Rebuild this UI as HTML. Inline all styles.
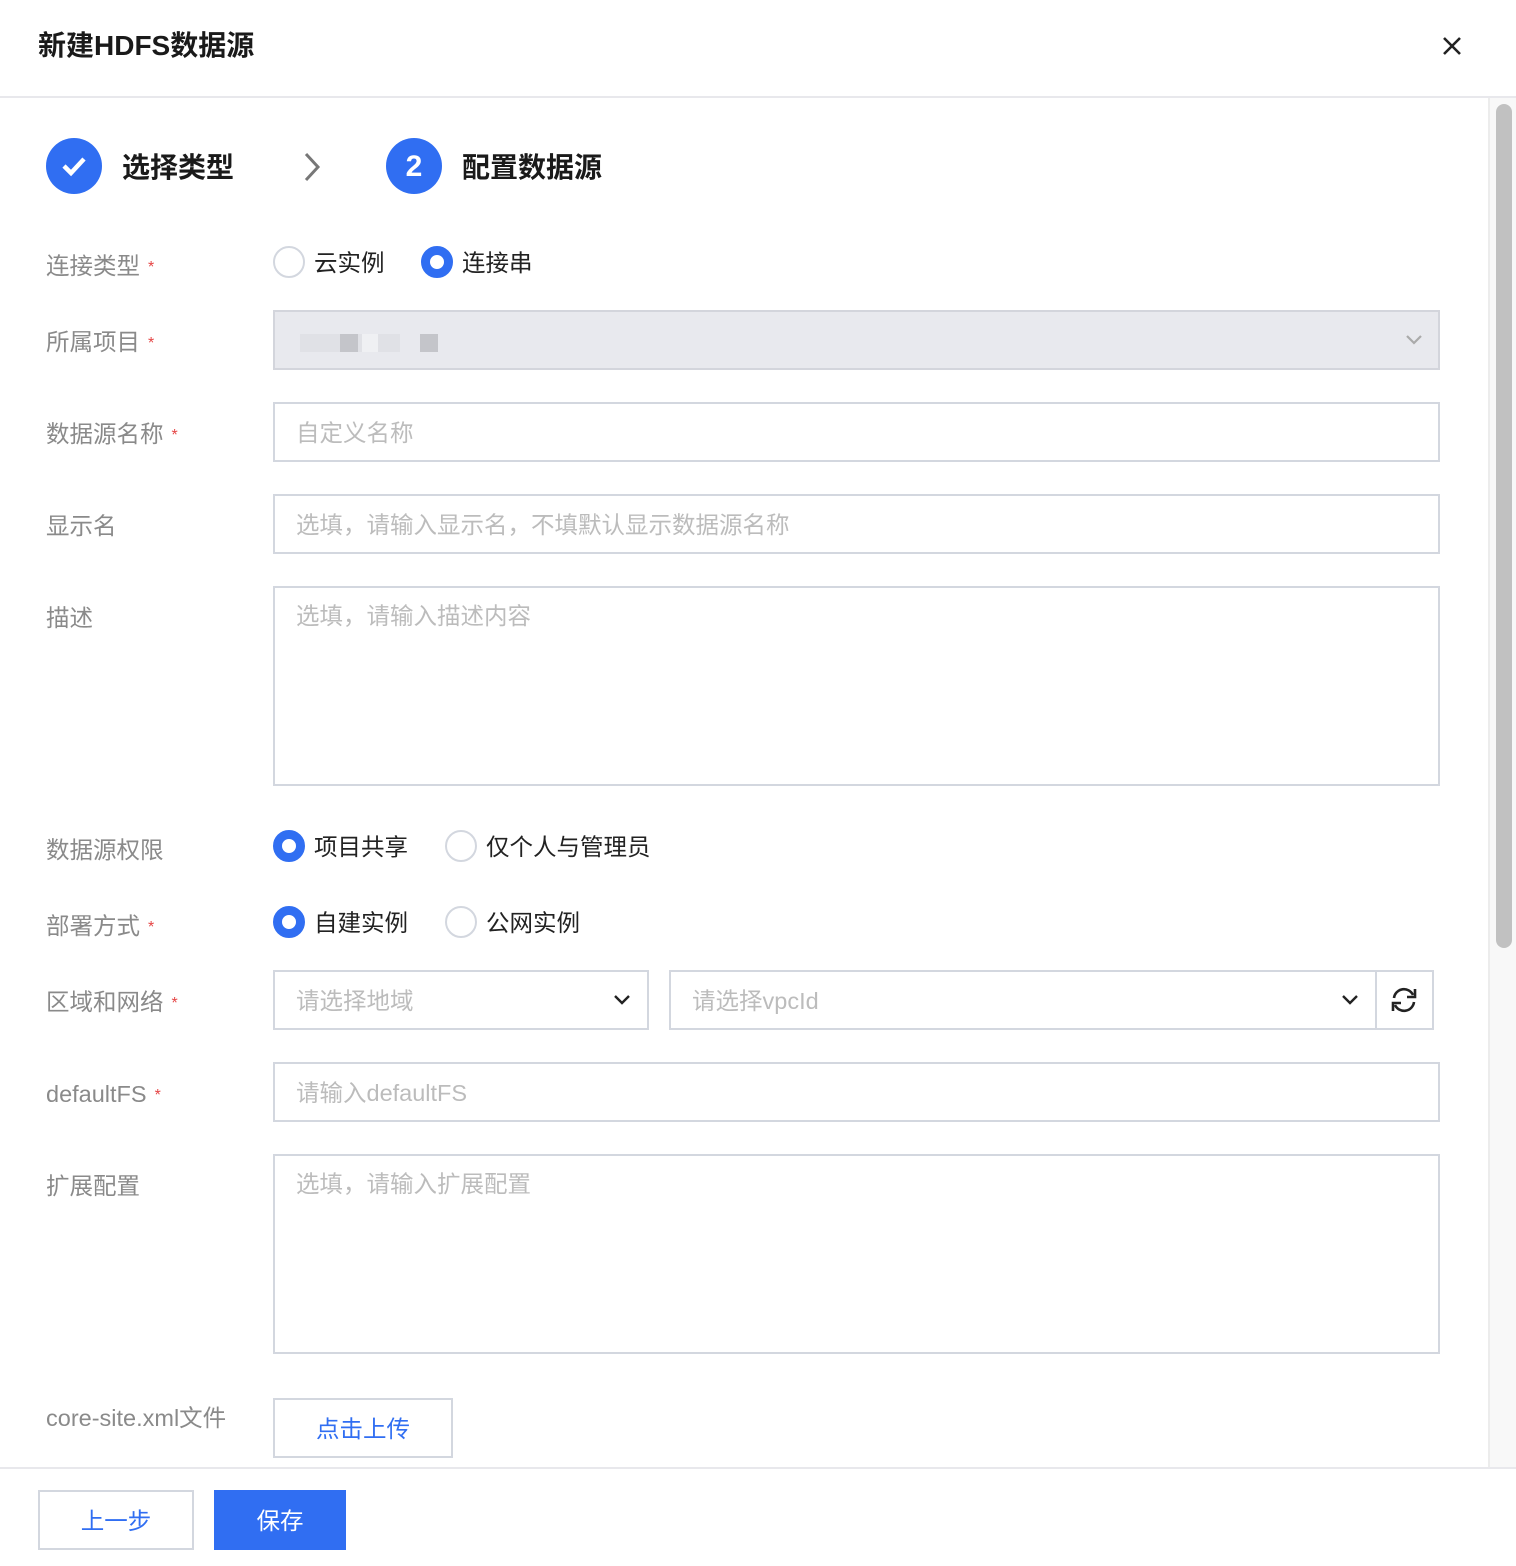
<!DOCTYPE html>
<html><head><meta charset="utf-8"><style>
*{margin:0;padding:0;box-sizing:border-box}
body{width:1516px;height:1566px;background:#fff;position:relative;overflow:hidden;font-family:"Liberation Sans","Noto Sans CJK SC",sans-serif;}
.a{position:absolute}
.lbl{position:absolute;left:46px;font-size:23.5px;color:#8a8a8a;line-height:30px}
.req{color:#e54545;font-size:16px;margin-left:8px;vertical-align:2px}
.inp{position:absolute;border:2px solid #d3d7df;background:#fff}
.ph{position:absolute;left:21px;font-size:23.5px;color:#bcbcbc;line-height:30px}
.radio{position:absolute;width:32px;height:32px;border-radius:50%;border:2px solid #d3d7df;background:#fff}
.radio.on{border:9px solid #306ef2}
.rt{position:absolute;font-size:23.5px;color:#222;line-height:30px}
</style></head><body>
<div class="a" style="left:38px;top:28px;font-size:28px;font-weight:bold;color:#1a1a1a;line-height:36px">新建HDFS数据源</div>
<svg class="a" style="left:1440px;top:34px" width="24" height="24" viewBox="0 0 24 24"><path d="M4 4L20 20M20 4L4 20" stroke="#222" stroke-width="2.6"/></svg>
<div class="a" style="left:0;top:96px;width:1516px;height:2px;background:#e8e8ec"></div>
<div class="a" style="left:1488px;top:98px;width:28px;height:1370px;background:#f8f8f8;border-left:2px solid #ececec"></div>
<div class="a" style="left:1496px;top:104px;width:16px;height:844px;background:#c1c1c1;border-radius:8px"></div>
<div class="a" style="left:46px;top:138px;width:56px;height:56px;border-radius:50%;background:#306ef2"></div>
<svg class="a" style="left:46px;top:138px" width="56" height="56" viewBox="0 0 56 56"><path d="M18 28l7 7 13-14" stroke="#fff" stroke-width="4.5" fill="none"/></svg>
<div class="a" style="left:122px;top:150px;font-size:28px;font-weight:bold;color:#1a1a1a;line-height:36px">选择类型</div>
<svg class="a" style="left:300px;top:150px" width="24" height="34" viewBox="0 0 24 34"><path d="M6 4l12 13-12 13" stroke="#777" stroke-width="3" fill="none"/></svg>
<div class="a" style="left:386px;top:138px;width:56px;height:56px;border-radius:50%;background:#306ef2;color:#fff;font-size:30px;font-weight:bold;text-align:center;line-height:58px">2</div>
<div class="a" style="left:462px;top:150px;font-size:28px;font-weight:bold;color:#1a1a1a;line-height:36px">配置数据源</div>
<div class="lbl" style="top:251px">连接类型<span class="req">*</span></div>
<div class="radio" style="left:273px;top:246px"></div><div class="rt" style="left:314px;top:248px">云实例</div>
<div class="radio on" style="left:421px;top:246px"></div><div class="rt" style="left:462px;top:248px">连接串</div>
<div class="lbl" style="top:327px">所属项目<span class="req">*</span></div>
<div class="inp" style="left:273px;top:310px;width:1167px;height:60px;background:#e8e9ee;border-color:#d3d5dc"></div>
<div class="a" style="left:300px;top:334px;width:100px;height:18px;background:#e0e1e6"></div>
<div class="a" style="left:340px;top:334px;width:18px;height:18px;background:#c4c5ca"></div>
<div class="a" style="left:362px;top:334px;width:16px;height:18px;background:#eff0f3"></div>
<div class="a" style="left:420px;top:334px;width:18px;height:18px;background:#c4c5ca"></div>
<svg class="a" style="left:1404px;top:332px" width="20" height="14" viewBox="0 0 20 14"><path d="M3 4l7 7 7-7" stroke="#aaa" stroke-width="2.2" fill="none"/></svg>
<div class="lbl" style="top:419px">数据源名称<span class="req">*</span></div>
<div class="inp" style="left:273px;top:402px;width:1167px;height:60px"><div class="ph" style="top:14px">自定义名称</div></div>
<div class="lbl" style="top:511px">显示名</div>
<div class="inp" style="left:273px;top:494px;width:1167px;height:60px"><div class="ph" style="top:14px">选填，请输入显示名，不填默认显示数据源名称</div></div>
<div class="lbl" style="top:603px">描述</div>
<div class="inp" style="left:273px;top:586px;width:1167px;height:200px"><div class="ph" style="top:13px">选填，请输入描述内容</div></div>
<div class="lbl" style="top:835px">数据源权限</div>
<div class="radio on" style="left:273px;top:830px"></div><div class="rt" style="left:314px;top:832px">项目共享</div>
<div class="radio" style="left:445px;top:830px"></div><div class="rt" style="left:486px;top:832px">仅个人与管理员</div>
<div class="lbl" style="top:911px">部署方式<span class="req">*</span></div>
<div class="radio on" style="left:273px;top:906px"></div><div class="rt" style="left:314px;top:908px">自建实例</div>
<div class="radio" style="left:445px;top:906px"></div><div class="rt" style="left:486px;top:908px">公网实例</div>
<div class="lbl" style="top:987px">区域和网络<span class="req">*</span></div>
<div class="inp" style="left:273px;top:970px;width:376px;height:60px"><div class="ph" style="top:14px">请选择地域</div></div>
<svg class="a" style="left:612px;top:992px" width="20" height="14" viewBox="0 0 20 14"><path d="M3 4l7 7 7-7" stroke="#222" stroke-width="2.4" fill="none"/></svg>
<div class="inp" style="left:669px;top:970px;width:708px;height:60px"><div class="ph" style="top:14px">请选择vpcId</div></div>
<svg class="a" style="left:1340px;top:992px" width="20" height="14" viewBox="0 0 20 14"><path d="M3 4l7 7 7-7" stroke="#222" stroke-width="2.4" fill="none"/></svg>
<div class="inp" style="left:1375px;top:970px;width:59px;height:60px"></div>
<svg class="a" style="left:1389px;top:985px" width="30" height="30" viewBox="0 0 30 30"><path d="M5 13A10 10 0 0 1 24 10M25 17A10 10 0 0 1 6 20" stroke="#222" stroke-width="2.6" fill="none"/><path d="M26 4v8h-8M4 26v-8h8" stroke="#222" stroke-width="2.6" fill="none"/></svg>
<div class="lbl" style="top:1079px">defaultFS<span class="req">*</span></div>
<div class="inp" style="left:273px;top:1062px;width:1167px;height:60px"><div class="ph" style="top:14px">请输入defaultFS</div></div>
<div class="lbl" style="top:1171px">扩展配置</div>
<div class="inp" style="left:273px;top:1154px;width:1167px;height:200px"><div class="ph" style="top:13px">选填，请输入扩展配置</div></div>
<div class="lbl" style="top:1403px">core-site.xml文件</div>
<div class="inp" style="left:273px;top:1398px;width:180px;height:60px;color:#306ef2;font-size:23.5px;text-align:center;line-height:58px">点击上传</div>
<div class="a" style="left:0;top:1467px;width:1516px;height:2px;background:#e8e8ec"></div>
<div class="inp" style="left:38px;top:1490px;width:156px;height:60px;color:#306ef2;font-size:23.5px;text-align:center;line-height:58px">上一步</div>
<div class="a" style="left:214px;top:1490px;width:132px;height:60px;background:#306ef2;color:#fff;font-size:23.5px;text-align:center;line-height:62px">保存</div>
</body></html>
